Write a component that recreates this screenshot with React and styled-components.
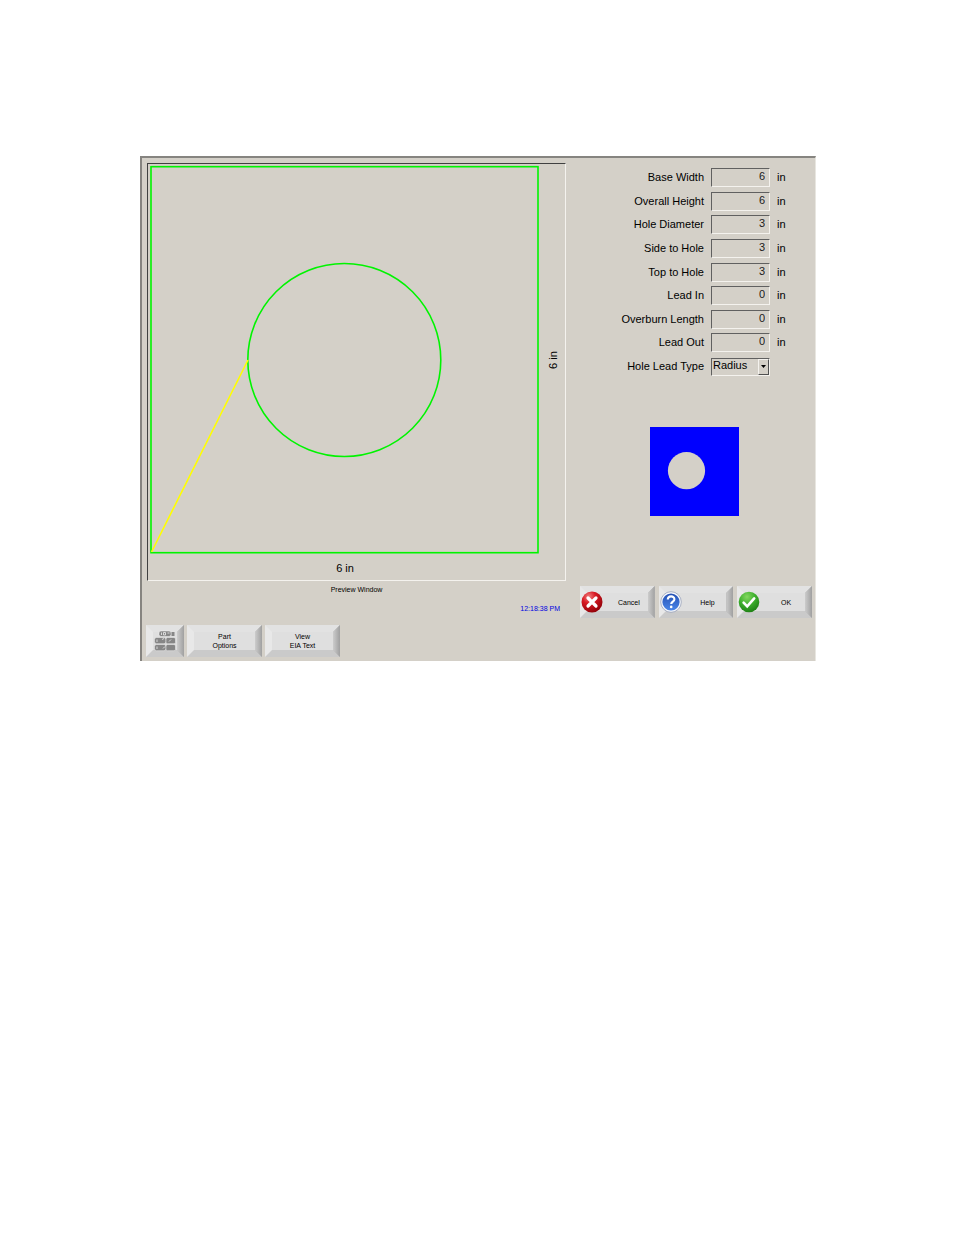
import React from "react";
import styled, { createGlobalStyle } from "styled-components";

const fields = [
  { id: "baseWidth", label: "Base Width", value: "6" },
  { id: "overallHeight", label: "Overall Height", value: "6" },
  { id: "holeDiameter", label: "Hole Diameter", value: "3" },
  { id: "sideToHole", label: "Side to Hole", value: "3" },
  { id: "topToHole", label: "Top to Hole", value: "3" },
  { id: "leadIn", label: "Lead In", value: "0" },
  { id: "overburn", label: "Overburn Length", value: "0" },
  { id: "leadOut", label: "Lead Out", value: "0" },
];

const CancelIcon = () => (
  <svg viewBox="0 0 22 22" aria-hidden="true">
    <defs>
      <radialGradient id="red" cx="35%" cy="25%" r="80%">
        <stop offset="0" stopColor="#f08080" />
        <stop offset="0.4" stopColor="#d81a24" />
        <stop offset="1" stopColor="#8e0008" />
      </radialGradient>
    </defs>
    <circle cx="11" cy="11" r="10.5" fill="url(#red)" />
    <path d="M7 7l8 8M15 7l-8 8" stroke="#fff" strokeWidth="3.2" strokeLinecap="round" />
  </svg>
);

const HelpIcon = () => (
  <svg viewBox="0 0 22 22" aria-hidden="true">
    <defs>
      <linearGradient id="blue" x1="0" y1="0" x2="0" y2="1">
        <stop offset="0" stopColor="#2450b4" />
        <stop offset="1" stopColor="#4a86e8" />
      </linearGradient>
    </defs>
    <circle cx="11" cy="11" r="10.3" fill="#f4f6fa" stroke="#8f9ab4" strokeWidth="0.7" />
    <circle cx="11" cy="11" r="8.6" fill="url(#blue)" />
    <path
      d="M7.8 8.6c0-4.2 6.6-4.2 6.6-.4 0 2.4-3.2 2.4-3.2 4.9"
      fill="none"
      stroke="#fff"
      strokeWidth="2.1"
    />
    <circle cx="11.2" cy="15.9" r="1.3" fill="#fff" />
  </svg>
);

const OkIcon = () => (
  <svg viewBox="0 0 22 22" aria-hidden="true">
    <defs>
      <radialGradient id="green" cx="40%" cy="25%" r="80%">
        <stop offset="0" stopColor="#84d860" />
        <stop offset="0.5" stopColor="#3cae2c" />
        <stop offset="1" stopColor="#1c7c14" />
      </radialGradient>
    </defs>
    <circle cx="11" cy="11" r="10.3" fill="url(#green)" />
    <path
      d="M5.6 11.6l3.6 3.8 7-8"
      fill="none"
      stroke="#fff"
      strokeWidth="2.6"
      strokeLinecap="round"
    />
  </svg>
);

const KeysIcon = () => (
  <svg viewBox="0 0 22 22" aria-hidden="true">
    <g fill="#868686" stroke="#f0f0f0" strokeWidth="0.5">
      <rect x="5" y="1" width="12" height="5.5" rx="2" />
      <rect x="0.5" y="7.5" width="11.5" height="6.2" rx="2" />
      <rect x="12" y="7.5" width="9.5" height="6.2" rx="1.5" />
      <rect x="0.5" y="14.5" width="11.5" height="6.2" rx="2" />
      <rect x="12" y="14.5" width="9.5" height="6.2" rx="1.5" />
    </g>
    <path d="M17.5 2h3v4h-3z" fill="#868686" />
    <path
      d="M7.5 2.5v2.5M9.5 2.5h2v2.5h-2zM13.5 3h2M3 9.5v2.5M8 9.5l2-1M15 11.5l2-2M3 16.5v2.5M9 18.5l2-2"
      fill="none"
      stroke="#ececec"
      strokeWidth="0.8"
    />
  </svg>
);

const Drawing = () => (
  <svg viewBox="0 0 417 416" role="img" aria-label="Part preview">
    <g fill="none" stroke="#00f400" strokeWidth="1.6">
      <rect x="3" y="2.7" width="387" height="386" />
      <circle cx="196.3" cy="196" r="96.5" />
    </g>
    <path d="M3.5 388L100 196" stroke="#ffff00" strokeWidth="1.6" />
    <text x="197" y="408" textAnchor="middle">6 in</text>
    <text transform="translate(409 196) rotate(-90)" textAnchor="middle">6 in</text>
  </svg>
);

const App = () => {
  return (
    <>
      <GlobalStyle />
      <Page>
        <Window>
          <Main>
            <PreviewColumn>
              <Preview>
                <Drawing />
              </Preview>
              <Caption>Preview Window</Caption>
              <Clock>12:18:38 PM</Clock>
            </PreviewColumn>
            <Side>
              <Form>
                {fields.map(({ id, label, value }) => (
                  <Row key={id}>
                    <label htmlFor={id}>{label}</label>
                    <Field id={id} type="text" defaultValue={value} />
                    <span>in</span>
                  </Row>
                ))}
                <Row>
                  <label htmlFor="leadType">Hole Lead Type</label>
                  <SelectBox>
                    <select id="leadType" defaultValue="Radius">
                      <option>Radius</option>
                      <option>Straight</option>
                    </select>
                    <Arrow>
                      <svg viewBox="0 0 5 3" aria-hidden="true">
                        <path d="M0 0h5L2.5 3z" />
                      </svg>
                    </Arrow>
                  </SelectBox>
                </Row>
              </Form>
              <Thumb viewBox="0 0 89 89" role="img" aria-label="Rectangle with hole">
                <path fill="#0000ff" d="M0 0h89v89H0z" />
                <circle cx="36.5" cy="43.7" r="18.6" fill="#d4d0c8" />
              </Thumb>
              <Actions>
                <IconButton type="button"><CancelIcon /><span>Cancel</span></IconButton>
                <IconButton type="button"><HelpIcon /><span>Help</span></IconButton>
                <IconButton type="button"><OkIcon /><span>OK</span></IconButton>
              </Actions>
            </Side>
          </Main>
          <Footer>
            <Button type="button" $width="38px" aria-label="Keypad"><KeysIcon /></Button>
            <Button type="button" $width="75px"><span>Part<br />Options</span></Button>
            <Button type="button" $width="75px"><span>View<br />EIA Text</span></Button>
          </Footer>
        </Window>
      </Page>
    </>
  );
};

const GlobalStyle = createGlobalStyle`
  * {
    box-sizing: border-box;
  }
  body {
    margin: 0;
    background: #fff;
    color: #000;
    font-family: "Liberation Sans", Arial, sans-serif;
    font-size: 11px;
  }
`;

const Page = styled.main`
  padding: 156px 138px 40px 140px;
`;

const Window = styled.section`
  background: #d4d0c8;
  border-top: 2px solid #868480;
  border-left: 2px solid #868480;
  border-right: 1px solid #e8e6e0;
  padding: 5px 3px 4px 4px;
`;

const Main = styled.div`
  display: flex;
  gap: 14px;
  padding-left: 1px;
`;

const PreviewColumn = styled.div`
  flex: 419 1 0;
  min-width: 0;
`;

const Preview = styled.div`
  border: 1px solid;
  border-color: #404040 #f4f2ee #f4f2ee #404040;
  svg {
    display: block;
    width: 100%;
    height: auto;
  }
  text {
    font-size: 11px;
  }
`;

const Caption = styled.p`
  margin: 4px 0 0;
  text-align: center;
  font-size: 7px;
  line-height: 10px;
`;

const Clock = styled.p`
  margin: 9px 6px 0 0;
  text-align: right;
  font-size: 7px;
  line-height: 10px;
  color: #0000e0;
`;

const Side = styled.div`
  flex: 232 1 0;
  min-width: 0;
  display: flex;
  flex-direction: column;
`;

const Form = styled.form`
  min-height: 208px;
  margin-top: 5px;
  display: flex;
  flex-direction: column;
  justify-content: space-between;
`;

const Row = styled.div`
  display: grid;
  grid-template-columns: 1fr 59px 35px;
  gap: 7px;
  align-items: center;
  line-height: 19px;
  label {
    text-align: right;
    white-space: nowrap;
  }
`;

const Field = styled.input`
  width: 100%;
  height: 19px;
  padding: 0 4px 2px 2px;
  border: 1px solid;
  border-color: #606060 #f4f2ee #f4f2ee #606060;
  background: transparent;
  font: inherit;
  text-align: right;
  color: #202020;
  outline: none;
`;

const SelectBox = styled.div`
  position: relative;
  height: 18px;
  border: 1px solid;
  border-color: #606060 #f4f2ee #f4f2ee #606060;
  select {
    display: block;
    width: 100%;
    height: 16px;
    padding: 0 12px 3px 1px;
    border: 0;
    appearance: none;
    background: transparent;
    font: inherit;
    line-height: 13px;
    color: #000;
    outline: none;
  }
`;

const Arrow = styled.span`
  position: absolute;
  top: 0;
  right: 0;
  bottom: 0;
  width: 11px;
  display: flex;
  align-items: center;
  justify-content: center;
  border: 1px solid;
  border-color: #f4f2ee #505050 #505050 #f4f2ee;
  pointer-events: none;
  svg {
    width: 5px;
    height: 3px;
  }
`;

const Thumb = styled.svg`
  width: 89px;
  height: 89px;
  margin: 51px 3px 0 0;
  align-self: center;
`;

const Actions = styled.div`
  display: flex;
  gap: 4px;
  margin-top: 70px;
`;

const Button = styled.button`
  position: relative;
  width: ${({ $width }) => $width};
  height: 32px;
  padding: 0;
  display: flex;
  align-items: center;
  justify-content: center;
  border: 0;
  background: #dfdfdf;
  font-family: inherit;
  font-size: 7px;
  line-height: 9px;
  color: #000;
  /* bevelled edge */
  &::before {
    content: "";
    position: absolute;
    inset: 0;
    border: 7px solid;
    border-color: #e2e2e2 #b8b8b8 #cacaca #e8e8e8;
  }
  &::after {
    content: "";
    position: absolute;
    inset: 0 0 0 auto;
    width: 7px;
    background: linear-gradient(to right, #cccccc, #a0a0a0);
    clip-path: polygon(100% 0, 100% 100%, 0 25px, 0 7px);
  }
  svg,
  span {
    position: relative;
    z-index: 1;
  }
  svg {
    width: 22px;
    height: 22px;
  }
`;

const IconButton = styled(Button)`
  flex: 1 1 0;
  min-width: 0;
  justify-content: flex-start;
  padding-left: 1px;
  span {
    flex: 1;
    text-align: center;
  }
`;

const Footer = styled.footer`
  display: flex;
  gap: 3px;
  margin-top: 7px;
`;

export default App;
